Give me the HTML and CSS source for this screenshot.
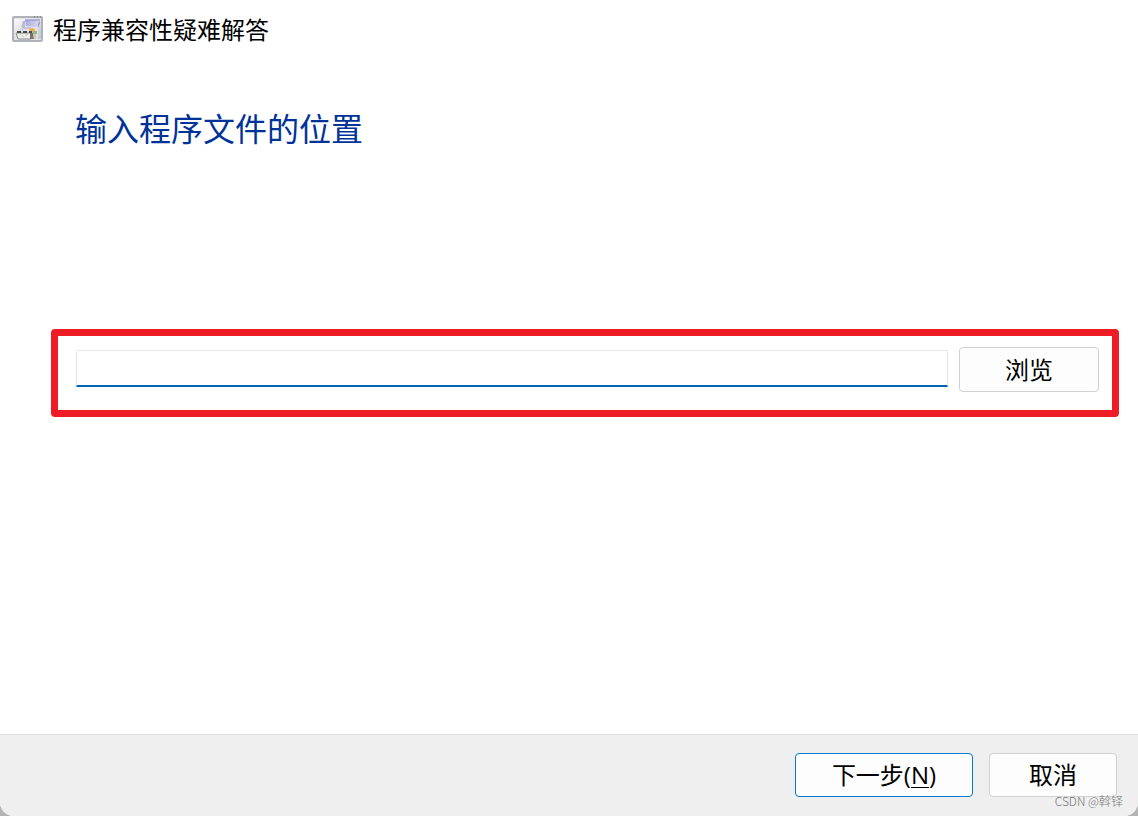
FILE: index.html
```html
<!DOCTYPE html>
<html lang="zh-CN">
<head>
  <meta charset="UTF-8">
  <meta name="viewport" content="width=device-width, initial-scale=1.0">
  <title>程序兼容性疑难解答</title>
  <link rel="stylesheet" href="styles.css">
</head>
<body>
  <form class="wizard">
    <header class="title-bar">
      <svg class="app-icon" width="32" height="28" viewBox="0 0 32 28" aria-hidden="true">
        <defs>
          <linearGradient id="pane" x1="0" y1="0" x2="1" y2="1">
            <stop offset="0" stop-color="#fafafc"/>
            <stop offset="1" stop-color="#c4c6ce"/>
          </linearGradient>
          <linearGradient id="sheet" x1="0" y1="0" x2="1" y2="0">
            <stop offset="0" stop-color="#a9a8de"/>
            <stop offset="1" stop-color="#dcdcf4"/>
          </linearGradient>
        </defs>
        <rect x="1" y="1" width="29" height="24" rx="1" fill="#e4e5ea" stroke="#b0b2ba" stroke-width="2"/>
        <path d="M22 1h1M25 1h1M28 1h1" stroke="#666a78"/>
        <rect x="2" y="3" width="27" height="20" fill="url(#pane)"/>
        <path d="M11 5h2v7l-3 3H8z" fill="#b7b9d5"/>
        <path d="M9 11h17v12H9z" fill="#dfe0ea"/>
        <path d="M13 4h15l-2 7-12-1z" fill="url(#sheet)"/>
        <path d="M13 4h15" stroke="#8583c4"/>
        <path d="M27 5l1 2-2 5v-3z" fill="#8f91b8"/>
        <path d="M10 12h9" stroke="#a5a7c6"/>
        <circle cx="20" cy="15" r="3" fill="#efb14c"/>
        <path d="M21 15h4v3h-4z" fill="#8cb98e"/>
        <path d="M4 17h15v6H6z" fill="#ecefea" stroke="#8a8a8e"/>
        <path d="M5 16h4m2 0h4m2 0h3" stroke="#4a4a4d" stroke-width="2"/>
        <path d="M8 18l4 3" stroke="#b6dcae"/>
        <path d="M13 20l3-2" stroke="#efb3b3"/>
        <path d="M18 17h3l1 6h-4z" fill="#737477"/>
        <path d="M21 18h3v5h-2z" fill="#d8c5a8"/>
      </svg>
      <span class="title">程序兼容性疑难解答</span>
    </header>

    <main class="content">
      <h1><label for="program-path">输入程序文件的位置</label></h1>
      <div class="path-box">
        <input class="path-input" id="program-path" type="text">
        <button class="btn browse" type="button">浏览</button>
      </div>
    </main>

    <footer class="actions">
      <button class="btn next" type="submit">下一步(<u>N</u>)</button>
      <button class="btn cancel" type="button">取消</button>
      <span class="watermark">CSDN @斡铎</span>
    </footer>
  </form>
</body>
</html>
```
FILE: styles.css
```css
* {
  box-sizing: border-box;
}

body {
  margin: 0;
  background: #b4b4b4;
  font-family: "Open Sans", "Noto Sans CJK SC", sans-serif;
  color: #000;
}

.wizard {
  display: flex;
  flex-direction: column;
  min-height: 100vh;
  background: #fff;
  border-radius: 0 0 14px 14px;
  overflow: hidden;
}

.title-bar {
  display: flex;
  align-items: center;
  gap: 9px;
  padding: 12px 12px 0;
}

.title {
  font-size: 24px;
  line-height: 36px;
}

.content {
  flex: 1;
  padding: 57px 19px 40px 51px;
}

h1 {
  margin: 0 0 176px 24px;
  font-size: 32px;
  font-weight: 400;
  line-height: 48px;
  color: #003399;
}

/* Path entry */
.path-box {
  display: flex;
  align-items: center;
  gap: 11px;
  padding: 11px 13px 18px 18px;
  border: 7px solid #ee1c24;
  border-radius: 4px;
}

.path-input {
  flex: 1;
  min-width: 0;
  height: 37px;
  margin: 0 0 2px;
  padding: 0 8px;
  border: 1px solid #e6e6e6;
  border-bottom: 2px solid #0067b8;
  border-radius: 2px 2px 0 0;
  background: #fff;
  font: inherit;
  font-size: 24px;
  outline: none;
}

.btn {
  padding: 0 8px;
  border: 1px solid #d0d0d0;
  border-radius: 4px;
  background: #fdfdfd;
  color: #000;
  font: inherit;
  font-size: 24px;
  line-height: 36px;
}

.browse {
  width: 140px;
  height: 45px;
}

/* Footer */
.actions {
  position: relative;
  display: flex;
  justify-content: flex-end;
  gap: 16px;
  padding: 18px 21px 19px;
  border-top: 1px solid #dfdfdf;
  background: #efefef;
}

.next,
.cancel {
  height: 44px;
}

.next {
  width: 178px;
  border-color: #0078d4;
}

.next u {
  text-decoration-thickness: 1px;
  text-underline-offset: 3px;
}

.cancel {
  width: 128px;
}

.watermark {
  position: absolute;
  right: 15px;
  bottom: 6px;
  font-family: "Noto Sans CJK SC", sans-serif;
  font-size: 12px;
  font-weight: 300;
  line-height: 18px;
  color: #777;
}
```
